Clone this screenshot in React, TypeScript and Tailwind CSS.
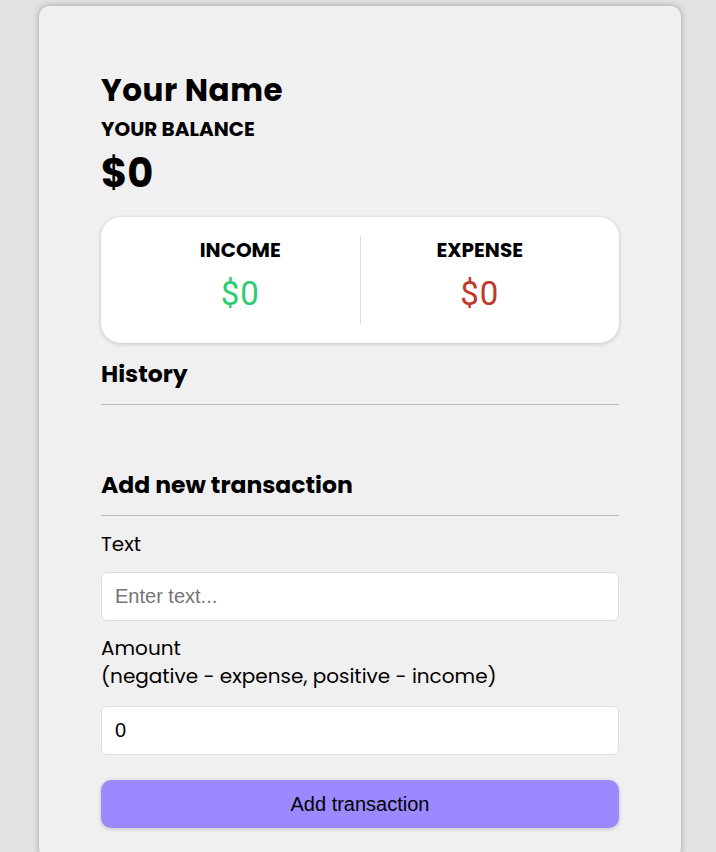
export default function App() {
  return (
    <div className="min-h-screen bg-[#e2e2e2] flex justify-center pl-[4px] pt-[6px] font-['Poppins','Inter',sans-serif] text-black">
      <div className="w-[642px] bg-[#f0f0f0] rounded-[10px] shadow-[0_0_6px_rgba(0,0,0,0.3)] px-[62px] pt-[64px] pb-[30px]">
        <h1 className="text-[31px] font-bold leading-[40px] tracking-[0.5px]">Your Name</h1>
        <h4 className="text-[20px] font-bold leading-[26px] mt-[6px] uppercase">Your Balance</h4>
        <h1 className="text-[40px] font-bold leading-[50px] mt-[6px]">$0</h1>

        <div className="mt-[19px] bg-white rounded-[20px] shadow-[0_1px_4px_rgba(0,0,0,0.2)] flex px-[20px] py-[18px]">
          <div className="flex-1 flex flex-col items-center pt-[2px]">
            <h4 className="text-[20px] font-bold uppercase leading-[27px]">Income</h4>
            <p className="font-['Roboto',sans-serif] text-[33px] tracking-[1px] text-[#2ecc71] mt-[10px] leading-[40px]">$0</p>
          </div>
          <div className="w-px h-[90px] bg-[#dedede]" />
          <div className="flex-1 flex flex-col items-center pt-[2px]">
            <h4 className="text-[20px] font-bold uppercase leading-[27px]">Expense</h4>
            <p className="font-['Roboto',sans-serif] text-[33px] tracking-[1px] text-[#c0392b] mt-[10px] leading-[40px]">$0</p>
          </div>
        </div>

        <h3 className="text-[23.5px] font-bold leading-[34px] mt-[14px] border-b border-[#bbb] pb-[13px]">History</h3>
        <ul className="h-[40px]" />

        <h3 className="text-[23.5px] font-bold leading-[34px] mt-[23px] border-b border-[#bbb] pb-[13px]">Add new transaction</h3>
        <form className="mt-[13px]">
          <label className="block text-[20px] leading-[30px]">Text</label>
          <input
            type="text"
            placeholder="Enter text..."
            className="mt-[13px] w-full h-[49px] bg-white border border-[#dedede] rounded-[6px] px-[13px] text-[20px] font-['Liberation_Sans',Arial,sans-serif] placeholder-[#757575] outline-none"
          />
          <label className="block text-[20px] leading-[28px] mt-[13px]">
            Amount <br />
            (negative - expense, positive - income)
          </label>
          <input
            type="number"
            defaultValue={0}
            className="mt-[16px] w-full h-[49px] bg-white border border-[#dedede] rounded-[6px] px-[13px] text-[20px] font-['Liberation_Sans',Arial,sans-serif] outline-none"
          />
          <button
            type="button"
            className="mt-[25px] w-full h-[48px] bg-[#9c88ff] rounded-[10px] shadow-[0_1px_4px_rgba(0,0,0,0.2)] text-[20px] font-['Liberation_Sans',Arial,sans-serif] text-black"
          >
            Add transaction
          </button>
        </form>
      </div>
    </div>
  );
}
